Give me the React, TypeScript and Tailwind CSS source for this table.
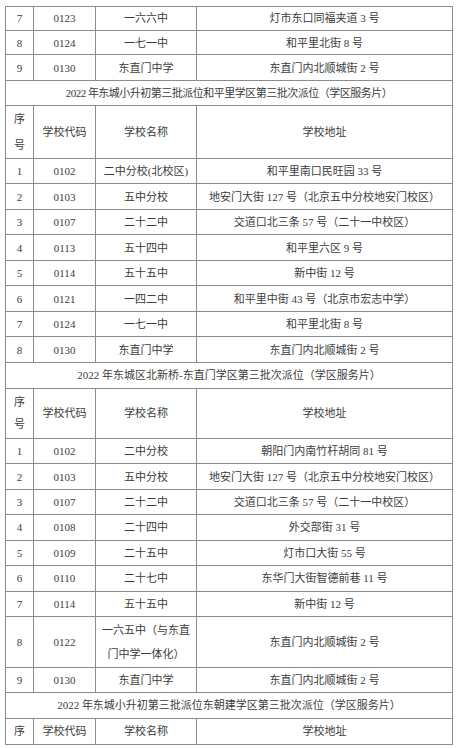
import React from 'react';

// [序号, 学校代码, 学校名称, 学校地址, row height class]
type Row = [string, string, React.ReactNode, string, string];

const tail1: Row[] = [
  ['7', '0123', '一六六中', '灯市东口同福夹道 3 号', 'h-[23.7px]'],
  ['8', '0124', '一七一中', '和平里北街 8 号', 'h-[24.7px]'],
  ['9', '0130', '东直门中学', '东直门内北顺城街 2 号', 'h-[25.6px]'],
];

const hepingli: Row[] = [
  ['1', '0102', '二中分校(北校区)', '和平里南口民旺园 33 号', 'h-[25.5px]'],
  ['2', '0103', '五中分校', '地安门大街 127 号（北京五中分校地安门校区）', 'h-[25.5px]'],
  ['3', '0107', '二十二中', '交道口北三条 57 号（二十一中校区）', 'h-[25.5px]'],
  ['4', '0113', '五十四中', '和平里六区 9 号', 'h-[25.5px]'],
  ['5', '0114', '五十五中', '新中街 12 号', 'h-[25.5px]'],
  ['6', '0121', '一四二中', '和平里中街 43 号（北京市宏志中学）', 'h-[25.5px]'],
  ['7', '0124', '一七一中', '和平里北街 8 号', 'h-[25.5px]'],
  ['8', '0130', '东直门中学', '东直门内北顺城街 2 号', 'h-[25.5px]'],
];

const beixinqiao: Row[] = [
  ['1', '0102', '二中分校', '朝阳门内南竹杆胡同 81 号', 'h-[25.43px]'],
  ['2', '0103', '五中分校', '地安门大街 127 号（北京五中分校地安门校区）', 'h-[25.43px]'],
  ['3', '0107', '二十二中', '交道口北三条 57 号（二十一中校区）', 'h-[25.43px]'],
  ['4', '0108', '二十四中', '外交部街 31 号', 'h-[25.43px]'],
  ['5', '0109', '二十五中', '灯市口大街 55 号', 'h-[25.43px]'],
  ['6', '0110', '二十七中', '东华门大街智德前巷 11 号', 'h-[25.43px]'],
  ['7', '0114', '五十五中', '新中街 12 号', 'h-[25.43px]'],
  [
    '8',
    '0122',
    <>
      一六五中（与东直
      <br />
      门中学一体化）
    </>,
    '东直门内北顺城街 2 号',
    'h-[51px] leading-[24px]',
  ],
  ['9', '0130', '东直门中学', '东直门内北顺城街 2 号', 'h-[25px]'],
];

const cell =
  'flex items-center justify-center overflow-hidden text-center whitespace-nowrap border-r border-b border-[#8c8c8c]';
const cols = 'grid grid-cols-[28px_62px_101px_256px] grid-rows-[100%]';

function DataRow({ r }: { r: Row }) {
  return (
    <div className={`${cols} ${r[4]}`}>
      <div className={cell}>{r[0]}</div>
      <div className={cell}>{r[1]}</div>
      <div className={cell}>{r[2]}</div>
      <div className={cell}>{r[3]}</div>
    </div>
  );
}

function Title({ text, h, tight }: { text: string; h: string; tight?: boolean }) {
  return <div className={`${cell} ${h} ${tight ? 'tracking-[-0.5px]' : ''}`}>{text}</div>;
}

function Header({ h, gap }: { h: string; gap: string }) {
  return (
    <div className={`${cols} ${h}`}>
      <div className={`${cell} ${gap}`}>
        序<br />号
      </div>
      <div className={cell}>学校代码</div>
      <div className={cell}>学校名称</div>
      <div className={cell}>学校地址</div>
    </div>
  );
}

export default function App() {
  return (
    <div className="min-h-screen bg-white pt-[6px] pl-[5px] text-[11px] leading-[14px] text-[#3c3c3c] font-['Liberation_Serif','Noto_Sans_CJK_SC',serif]">
      <div className="w-[448px] border-l border-t border-[#8c8c8c]">
        {tail1.map((r) => (
          <DataRow key={'a' + r[0]} r={r} />
        ))}
        <Title tight h="h-[25px]" text="2022 年东城小升初第三批派位和平里学区第三批次派位（学区服务片）" />
        <Header h="h-[53px]" gap="leading-[26px]" />
        {hepingli.map((r) => (
          <DataRow key={'b' + r[0]} r={r} />
        ))}
        <Title h="h-[26px]" text="2022 年东城区北新桥-东直门学区第三批次派位（学区服务片）" />
        <Header h="h-[50px]" gap="leading-[22px]" />
        {beixinqiao.map((r) => (
          <DataRow key={'c' + r[0]} r={r} />
        ))}
        <Title h="h-[26px]" text="2022 年东城小升初第三批派位东朝建学区第三批次派位（学区服务片）" />
        <div className={`${cols} h-[26px]`}>
          <div className={cell}>序</div>
          <div className={cell}>学校代码</div>
          <div className={cell}>学校名称</div>
          <div className={cell}>学校地址</div>
        </div>
      </div>
    </div>
  );
}
